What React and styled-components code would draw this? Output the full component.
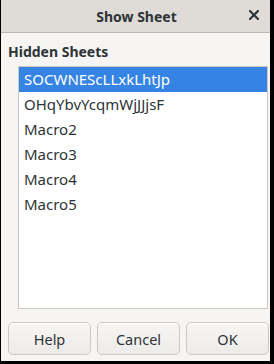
import React from "react";
import styled, { createGlobalStyle } from "styled-components";

const Global = createGlobalStyle`
  html, body { margin: 0; padding: 0; background: #000; }
  body { font-family: "Noto Sans", "Open Sans", sans-serif; }
`;

const Window = styled.div`
  margin-left: 1px;
  width: 269px;
  height: 361px;
  background: #f6f5f4;
  display: flex;
  flex-direction: column;
  color: #2e3436;
`;

const TitleBar = styled.div`
  height: 32px;
  flex: none;
  background: #dfdcd8;
  border-bottom: 1px solid #bfb8b1;
  display: flex;
  align-items: center;
  justify-content: center;
  position: relative;
`;

const Title = styled.div`
  font-weight: 700;
  font-size: 14px;
  color: #2e3436;
  margin-left: 2px;
`;

const Close = styled.div`
  position: absolute;
  right: 8px;
  top: 7px;
  width: 16px;
  height: 16px;
  display: flex;
  align-items: center;
  justify-content: center;
`;

const Body = styled.div`
  flex: 1;
  display: flex;
  flex-direction: column;
  padding: 9px 2px 6px 6px;
  min-height: 0;
`;

const Label = styled.div`
  font-weight: 700;
  font-size: 14px;
  height: 19px;
  line-height: 19px;
  margin-left: 1px;
`;

const List = styled.div`
  margin: 5px 0 0 11px;
  height: 243px;
  box-sizing: border-box;
  background: #fff;
  border: 1px solid #cdc7c2;
  display: flex;
  flex-direction: column;
`;

const Row = styled.div`
  height: 25px;
  line-height: 25px;
  padding-left: 5px;
  font-size: 15px;
  background: ${(p) => (p.$selected ? "#3584e4" : "transparent")};
  color: ${(p) => (p.$selected ? "#fff" : "#2e3436")};
`;

const Buttons = styled.div`
  margin-top: auto;
  display: grid;
  grid-template-columns: repeat(3, 83px);
  gap: 6px;
  margin-left: 1px;
`;

const Button = styled.div`
  height: 33px;
  box-sizing: border-box;
  border: 1px solid #cdc7c2;
  border-radius: 5px;
  background: linear-gradient(#f7f6f5, #edebe9);
  box-shadow: inset 0 1px #fff;
  display: flex;
  align-items: center;
  justify-content: center;
  font-size: 14.5px;
  color: #2e3436;
`;

const sheets = [
  "SOCWNEScLLxkLhtJp",
  "OHqYbvYcqmWjJJjsF",
  "Macro2",
  "Macro3",
  "Macro4",
  "Macro5",
];

export default function App() {
  return (
    <>
      <Global />
      <Window>
        <TitleBar>
          <Title>Show Sheet</Title>
          <Close>
            <svg width="10" height="10" viewBox="0 0 10 10">
              <path d="M1 1L9 9M9 1L1 9" stroke="#2e3436" strokeWidth="2.2" strokeLinecap="square" />
            </svg>
          </Close>
        </TitleBar>
        <Body>
          <Label>Hidden Sheets</Label>
          <List>
            {sheets.map((s, i) => (
              <Row key={s} $selected={i === 0}>
                {s}
              </Row>
            ))}
          </List>
          <Buttons>
            <Button>Help</Button>
            <Button>Cancel</Button>
            <Button>OK</Button>
          </Buttons>
        </Body>
      </Window>
    </>
  );
}
